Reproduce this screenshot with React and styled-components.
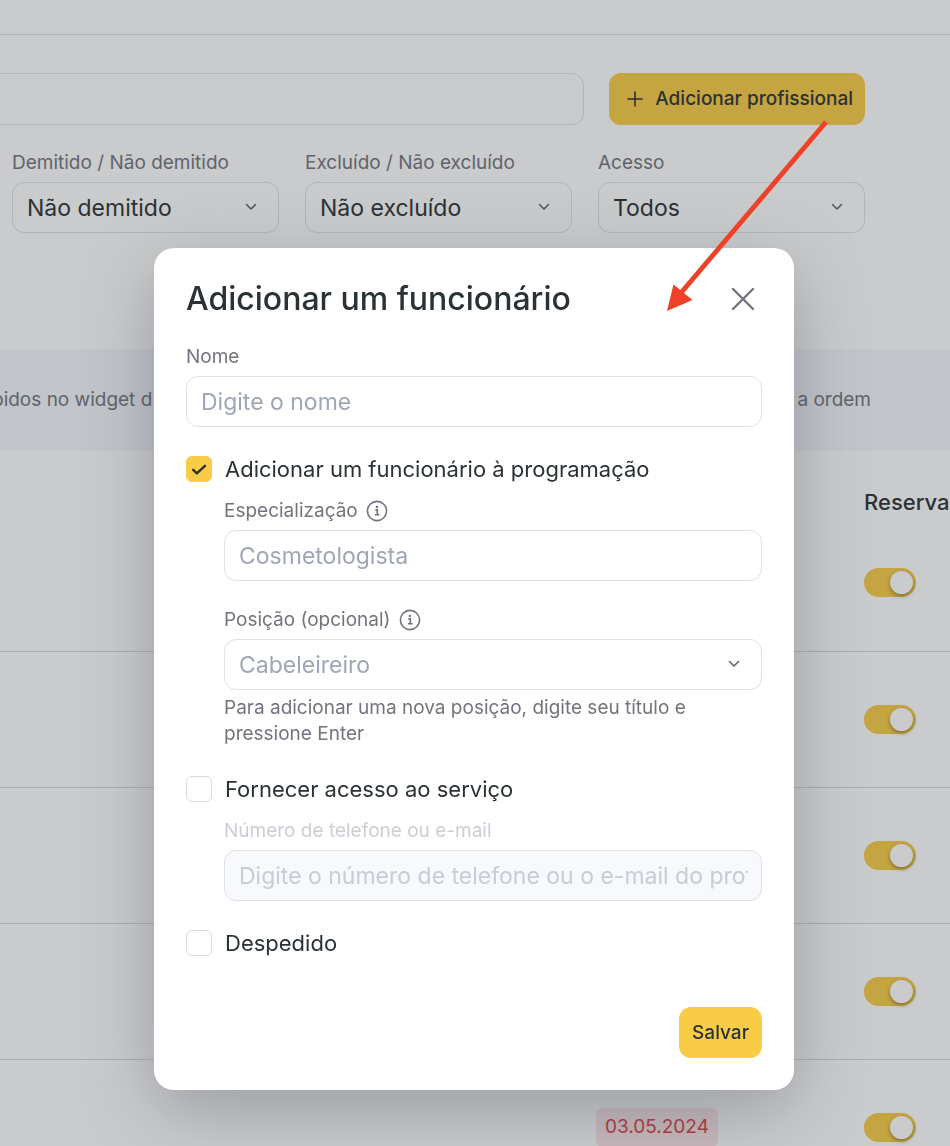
import { useState } from "react";
import styled, { createGlobalStyle } from "styled-components";

const colors = {
  text: "#2b3236",
  label: "#72757f",
  placeholder: "#9fa6b5",
  border: "#dfe0ea",
  yellow: "#f8cc46",
  red: "#dc4045",
};

const filters = [
  { id: "fired", label: "Demitido / Não demitido", value: "Não demitido" },
  { id: "deleted", label: "Excluído / Não excluído", value: "Não excluído" },
  { id: "access", label: "Acesso", value: "Todos" },
];

const rows = [
  { id: 1 },
  { id: 2 },
  { id: 3 },
  { id: 4 },
  { id: 5, date: "03.05.2024" },
];

const ChevronIcon = () => (
  <Chevron viewBox="0 0 12 8" aria-hidden="true">
    <path d="M1.5 1.5 6 6l4.5-4.5" />
  </Chevron>
);

const InfoIcon = () => (
  <Info viewBox="0 0 22 22" aria-hidden="true">
    <circle cx="11" cy="11" r="9.6" />
    <path d="M9.3 9.9h2v4.8M8.8 14.8h4.8" />
    <circle className="dot" cx="10.9" cy="7" r="1.2" />
  </Info>
);

const Select = ({ id, value, muted }) => (
  <SelectWrapper>
    <SelectInput id={id} defaultValue={value} $muted={muted}>
      <option>{value}</option>
    </SelectInput>
    <ChevronIcon />
  </SelectWrapper>
);

const StaffPage = () => (
  <Page>
    <TopBar />
    <Toolbar>
      <SearchInput type="search" aria-label="Pesquisar" />
      <AddButton type="button">
        <svg viewBox="0 0 16 16" aria-hidden="true">
          <path d="M8 1v14M1 8h14" />
        </svg>
        Adicionar profissional
      </AddButton>
    </Toolbar>
    <Filters>
      {filters.map((filter) => (
        <Field key={filter.id}>
          <Label htmlFor={filter.id}>{filter.label}</Label>
          <Select id={filter.id} value={filter.value} />
        </Field>
      ))}
    </Filters>
    <Banner>
      <span>bidos no widget d</span>
      <span>a ordem</span>
    </Banner>
    <StaffTable>
      <colgroup>
        <col />
        <col className="date" />
        <col className="booking" />
      </colgroup>
      <thead>
        <tr>
          <th />
          <th />
          <th>Reserva</th>
        </tr>
      </thead>
      <tbody>
        {rows.map((row) => (
          <tr key={row.id}>
            <td />
            <td>{row.date && <DateTag>{row.date}</DateTag>}</td>
            <td>
              <Toggle type="checkbox" defaultChecked aria-label="Reserva" />
            </td>
          </tr>
        ))}
      </tbody>
    </StaffTable>
  </Page>
);

const EmployeeModal = () => {
  const [inSchedule, setInSchedule] = useState(true);
  const [hasAccess, setHasAccess] = useState(false);

  return (
    <Overlay>
      <Modal role="dialog" aria-modal="true" aria-labelledby="modal-title">
        <ModalHeader>
          <h2 id="modal-title">Adicionar um funcionário</h2>
          <CloseButton type="button" aria-label="Fechar">
            <svg viewBox="0 0 24 24" aria-hidden="true">
              <path d="M2 2l20 20M22 2 2 22" />
            </svg>
          </CloseButton>
        </ModalHeader>

        <Form onSubmit={(e) => e.preventDefault()}>
          <Field>
            <Label htmlFor="name">Nome</Label>
            <TextInput id="name" placeholder="Digite o nome" />
          </Field>

          <Section>
            <CheckLabel>
              <Checkbox
                checked={inSchedule}
                onChange={(e) => setInSchedule(e.target.checked)}
              />
              Adicionar um funcionário à programação
            </CheckLabel>
            <Nested>
              <Field>
                <Label htmlFor="speciality">
                  Especialização <InfoIcon />
                </Label>
                <TextInput id="speciality" placeholder="Cosmetologista" />
              </Field>
              <Field>
                <Label htmlFor="position">
                  Posição (opcional) <InfoIcon />
                </Label>
                <Select id="position" value="Cabeleireiro" muted />
                <Hint>
                  Para adicionar uma nova posição, digite seu título e pressione
                  Enter
                </Hint>
              </Field>
            </Nested>
          </Section>

          <Section>
            <CheckLabel>
              <Checkbox
                checked={hasAccess}
                onChange={(e) => setHasAccess(e.target.checked)}
              />
              Fornecer acesso ao serviço
            </CheckLabel>
            <Nested>
              <Field>
                <Label htmlFor="contact" $disabled={!hasAccess}>
                  Número de telefone ou e-mail
                </Label>
                <TextInput
                  id="contact"
                  placeholder="Digite o número de telefone ou o e-mail do profissional"
                  disabled={!hasAccess}
                />
              </Field>
            </Nested>
          </Section>

          <CheckLabel>
            <Checkbox />
            Despedido
          </CheckLabel>

          <SaveButton type="submit">Salvar</SaveButton>
        </Form>
      </Modal>
    </Overlay>
  );
};

const App = () => (
  <>
    <GlobalStyle />
    <StaffPage />
    <EmployeeModal />
    <Arrow viewBox="0 0 160 192" aria-hidden="true">
      <path className="line" d="M160 2 14 174" />
      <path className="head" d="M1 191 7.500 164.500 26.500 180z" />
    </Arrow>
  </>
);

export default App;

const GlobalStyle = createGlobalStyle`
  *,
  *::before,
  *::after {
    box-sizing: border-box;
  }

  body {
    margin: 0;
    overflow: hidden;
    background: #ffffff;
    color: ${colors.text};
    font-family: Inter, "Liberation Sans", sans-serif;
    font-size: 22px;
    line-height: 26px;
  }

  button,
  input,
  select {
    font: inherit;
    color: inherit;
  }
`;

const Page = styled.main`
  height: 100vh;
  overflow: hidden;
`;

const TopBar = styled.header`
  height: 35px;
  border-bottom: 1px solid ${colors.border};
`;

const Toolbar = styled.div`
  display: flex;
  gap: 25px;
  margin-left: -16px;
  padding: 38px 85px 0 0;
`;

const fieldHeight = "51px";

const SearchInput = styled.input`
  flex: 1;
  min-width: 0;
  height: 52px;
  padding: 0 32px;
  border: 1px solid ${colors.border};
  border-radius: 12px;
  background: transparent;
  appearance: none;
`;

const AddButton = styled.button`
  display: flex;
  align-items: center;
  gap: 12px;
  height: 52px;
  padding: 0 12px 0 18px;
  border: none;
  border-radius: 12px;
  background: ${colors.yellow};
  font-size: 19px;
  font-weight: 500;
  white-space: nowrap;

  svg {
    width: 16px;
    height: 16px;
    stroke: ${colors.text};
    stroke-width: 1.6;
    stroke-linecap: round;
  }
`;

const Filters = styled.div`
  display: grid;
  grid-template-columns: repeat(3, 1fr);
  gap: 26px;
  padding: 24px 85px 0 12px;
`;

const Field = styled.div`
  display: flex;
  flex-direction: column;
`;

const Label = styled.label`
  display: flex;
  align-items: center;
  gap: 8px;
  margin-bottom: 5px;
  color: ${({ $disabled }) => ($disabled ? "#cbced6" : colors.label)};
  font-size: 19px;
  line-height: 28px;
`;

const TextInput = styled.input`
  width: 100%;
  height: ${fieldHeight};
  padding: 0 13px 0 14px;
  border: 1px solid ${colors.border};
  border-radius: 12px;
  background: #ffffff;
  font-size: 23px;

  &::placeholder {
    color: ${colors.placeholder};
  }

  &:disabled {
    background: #f7f9fd;
  }

  &:disabled::placeholder {
    color: #c8ccd5;
  }
`;

const SelectWrapper = styled.div`
  position: relative;
`;

const SelectInput = styled.select`
  display: block;
  width: 100%;
  height: ${fieldHeight};
  padding: 0 40px 0 14px;
  border: 1px solid ${colors.border};
  border-radius: 12px;
  background: transparent;
  color: ${({ $muted }) => ($muted ? colors.placeholder : colors.text)};
  font-size: 23px;
  appearance: none;
`;

const Chevron = styled.svg`
  position: absolute;
  top: 21px;
  right: 22px;
  width: 12px;
  height: 8px;
  fill: none;
  stroke: #62656b;
  stroke-width: 1.6;
  stroke-linecap: round;
  stroke-linejoin: round;
  pointer-events: none;
`;

const Info = styled.svg`
  width: 22px;
  height: 22px;
  fill: none;
  stroke: ${colors.label};
  stroke-width: 1.6;

  .dot {
    fill: ${colors.label};
    stroke: none;
  }
`;

const Banner = styled.div`
  display: flex;
  align-items: center;
  justify-content: space-between;
  height: 102px;
  margin-top: 116px;
  padding-right: 79px;
  background: #f4f7fb;
  color: ${colors.label};
  font-size: 19px;

  span:first-child {
    margin-left: -8px;
  }
`;

const StaffTable = styled.table`
  width: 100%;
  table-layout: fixed;
  border-collapse: collapse;

  .date {
    width: 268px;
  }

  .booking {
    width: 86px;
  }

  th {
    height: 64px;
    padding: 0;
    font-weight: 500;
    text-align: left;
    vertical-align: bottom;
    white-space: nowrap;
  }

  td {
    height: 136px;
    padding: 0;
    border-bottom: 1px solid #d9dade;
  }
`;

const DateTag = styled.span`
  display: inline-flex;
  align-items: center;
  height: 39px;
  padding: 0 9px;
  border-radius: 6px;
  background: #fbe6e9;
  color: ${colors.red};
  font-size: 19px;
`;

const Toggle = styled.input`
  display: flex;
  align-items: center;
  width: 52px;
  height: 29px;
  margin: 0;
  padding: 3px;
  border-radius: 15px;
  background: #d5d8df;
  appearance: none;

  &::before {
    content: "";
    width: 23px;
    height: 23px;
    border-radius: 50%;
    background: #ffffff;
    box-shadow: 0 2px 4px rgba(0, 0, 0, 0.35);
  }

  &:checked {
    justify-content: flex-end;
    background: ${colors.yellow};
  }
`;

const Overlay = styled.div`
  position: fixed;
  inset: 0;
  display: flex;
  align-items: flex-start;
  justify-content: center;
  padding: 248px 156px 56px 154px;
  background: rgba(44, 47, 50, 0.25);
`;

const Modal = styled.section`
  width: 100%;
  max-width: 640px;
  padding: 32px;
  border-radius: 20px;
  background: #ffffff;
  box-shadow: 0 20px 70px rgba(62, 70, 84, 0.35);
`;

const ModalHeader = styled.header`
  display: flex;
  align-items: center;
  justify-content: space-between;
  margin-bottom: 25px;

  h2 {
    margin: 0;
    font-size: 32px;
    font-weight: 500;
    line-height: 38px;
  }
`;

const CloseButton = styled.button`
  display: grid;
  place-items: center;
  width: 38px;
  height: 38px;
  padding: 0;
  border: none;
  background: transparent;

  svg {
    width: 24px;
    height: 24px;
    stroke: ${colors.label};
    stroke-width: 2.4;
    stroke-linecap: round;
  }
`;

const Form = styled.form`
  display: flex;
  flex-direction: column;
  gap: 29px;
`;

const Section = styled.div`
  display: flex;
  flex-direction: column;
  gap: 15px;
`;

const Nested = styled.div`
  display: flex;
  flex-direction: column;
  gap: 25px;
  padding-left: 38px;
`;

const CheckLabel = styled.label`
  display: flex;
  align-items: center;
  gap: 13px;
`;

const Checkbox = styled.input.attrs({ type: "checkbox" })`
  flex: none;
  width: 26px;
  height: 26px;
  margin: 0;
  border: 1px solid #d9dbe4;
  border-radius: 6px;
  background: #ffffff;
  appearance: none;

  &:checked {
    border-color: ${colors.yellow};
    background: ${colors.yellow}
      url("data:image/svg+xml,%3Csvg xmlns='http://www.w3.org/2000/svg' viewBox='0 0 24 24' fill='none' stroke='%232b3236' stroke-width='2.4' stroke-linecap='round' stroke-linejoin='round'%3E%3Cpath d='M6.200 12.800 9.800 16.300 18 8.800'/%3E%3C/svg%3E")
      center / contain no-repeat;
  }
`;

const Hint = styled.p`
  margin: 5px 0 0;
  color: ${colors.label};
  font-size: 19px;
  line-height: 26px;
`;

const SaveButton = styled.button`
  align-self: flex-end;
  height: ${fieldHeight};
  margin-top: 22px;
  padding: 0 13px;
  border: none;
  border-radius: 12px;
  background: ${colors.yellow};
  font-size: 19px;
  font-weight: 500;
`;

const Arrow = styled.svg`
  position: absolute;
  top: 120px;
  left: 666px;
  width: 160px;
  height: 192px;
  overflow: visible;
  pointer-events: none;

  .line {
    fill: none;
    stroke: #ed4128;
    stroke-width: 5;
  }

  .head {
    fill: #ed4128;
  }
`;
